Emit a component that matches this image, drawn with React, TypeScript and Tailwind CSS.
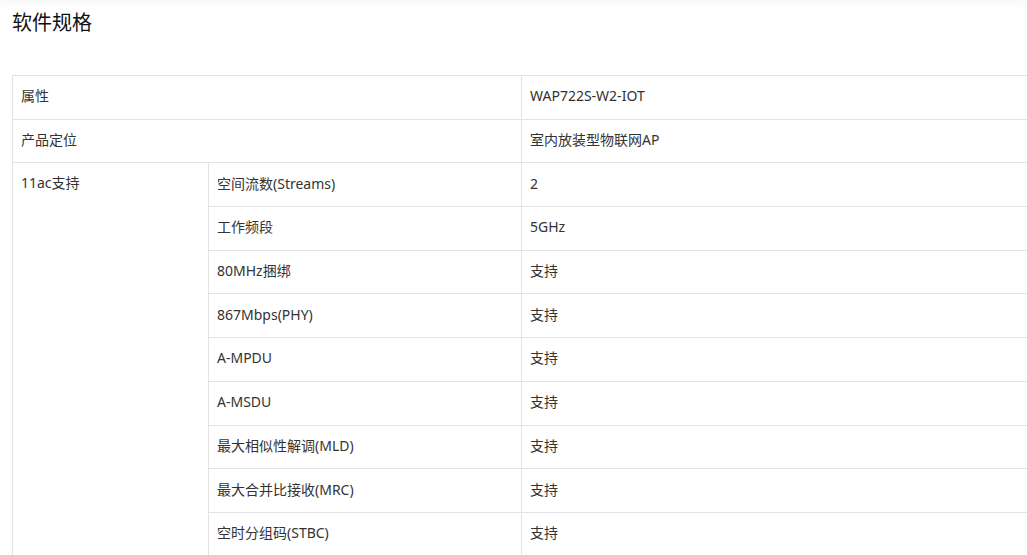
import React from "react";

const rows: [string, string][] = [
  ["空间流数(Streams)", "2"],
  ["工作频段", "5GHz"],
  ["80MHz捆绑", "支持"],
  ["867Mbps(PHY)", "支持"],
  ["A-MPDU", "支持"],
  ["A-MSDU", "支持"],
  ["最大相似性解调(MLD)", "支持"],
  ["最大合并比接收(MRC)", "支持"],
  ["空时分组码(STBC)", "支持"],
];

const cell = "border border-[#e3e3e3] pl-[8px] pr-2 pb-[3px] h-[43.7px] align-middle";

export default function App() {
  return (
    <div
      className="w-[1027px] h-[555px] overflow-hidden bg-white text-[#333]"
      style={{ fontFamily: '"Noto Sans", "Noto Sans CJK SC", sans-serif' }}
    >
      <div className="h-0 w-full shadow-[0_0_8px_2px_rgba(0,0,0,0.08)]" />
      <div className="pt-[9px] pl-[12px] text-[20px] leading-[28px] text-[#111]">软件规格</div>
      <div className="pl-[12px] pt-[38px]">
        <table className="border-collapse w-[1060px] table-fixed text-[14px] leading-[21px]">
          <colgroup>
            <col className="w-[196px]" />
            <col className="w-[313px]" />
            <col />
          </colgroup>
          <tbody>
            <tr>
              <td className={cell} colSpan={2}>属性</td>
              <td className={cell}>WAP722S-W2-IOT</td>
            </tr>
            <tr>
              <td className={cell} colSpan={2}>产品定位</td>
              <td className={cell}>室内放装型物联网AP</td>
            </tr>
            {rows.map(([k, v], i) => (
              <tr key={k}>
                {i === 0 && (
                  <td
                    className="border border-[#e3e3e3] pl-[8px] pt-[9px] align-top"
                    rowSpan={rows.length}
                  >
                    11ac支持
                  </td>
                )}
                <td className={cell}>{k}</td>
                <td className={cell}>{v}</td>
              </tr>
            ))}
          </tbody>
        </table>
      </div>
    </div>
  );
}
